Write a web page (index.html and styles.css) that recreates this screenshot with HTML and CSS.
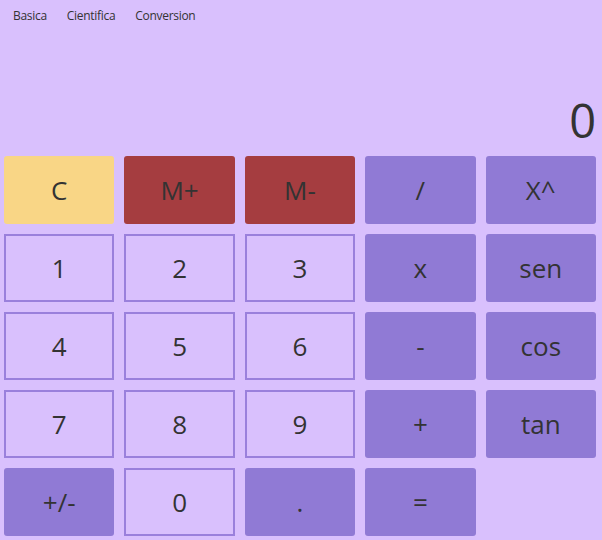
FILE: index.html
```html
<!DOCTYPE html>
<html lang="es">
<head>
<meta charset="utf-8">
<title>Calculadora</title>
<link rel="stylesheet" href="styles.css">
</head>
<body>
<nav class="menu">
  <a class="menu-item">Basica</a>
  <a class="menu-item">Cientifica</a>
  <a class="menu-item">Conversion</a>
</nav>
<div class="display">0</div>
<div class="keys">
  <button class="key key-clear">C</button>
  <button class="key key-mem">M+</button>
  <button class="key key-mem">M-</button>
  <button class="key key-op">/</button>
  <button class="key key-op">X^</button>

  <button class="key key-num">1</button>
  <button class="key key-num">2</button>
  <button class="key key-num">3</button>
  <button class="key key-op">x</button>
  <button class="key key-op">sen</button>

  <button class="key key-num">4</button>
  <button class="key key-num">5</button>
  <button class="key key-num">6</button>
  <button class="key key-op">-</button>
  <button class="key key-op">cos</button>

  <button class="key key-num">7</button>
  <button class="key key-num">8</button>
  <button class="key key-num">9</button>
  <button class="key key-op">+</button>
  <button class="key key-op">tan</button>

  <button class="key key-op">+/-</button>
  <button class="key key-num">0</button>
  <button class="key key-op">.</button>
  <button class="key key-op">=</button>
</div>
</body>
</html>
```
FILE: styles.css
```css
html, body {
  margin: 0;
  padding: 0;
  background: #d9c0fd;
  font-family: "Open Sans", "Noto Sans", sans-serif;
  color: #333333;
}

.menu {
  display: flex;
  height: 30px;
  align-items: center;
  padding-left: 3px;
}

.menu-item {
  font-size: 12px;
  padding: 0 10px;
  color: #333333;
  letter-spacing: -0.3px;
}

.display {
  height: 126px;
  box-sizing: border-box;
  display: flex;
  align-items: flex-end;
  justify-content: flex-end;
  padding-right: 6px;
  padding-bottom: 12px;
  font-size: 47px;
  line-height: 1;
  font-weight: 400;
}

.keys {
  display: grid;
  grid-template-columns: repeat(5, 1fr);
  grid-template-rows: repeat(5, 68px);
  column-gap: 10px;
  row-gap: 10px;
  padding: 0 6px 0 4px;
}

.key {
  font-family: "Open Sans", "Noto Sans", sans-serif;
  font-size: 26px;
  color: #333333;
  border: none;
  border-radius: 3px;
  padding: 0;
  margin: 0;
  line-height: 1;
}

.key-clear {
  background: #f9d686;
}

.key-mem {
  background: #a53d40;
}

.key-op {
  background: #907ad5;
}

.key-num {
  background: #d9c0fd;
  border: 2px solid #9a80dc;
  border-radius: 0;
}
```
